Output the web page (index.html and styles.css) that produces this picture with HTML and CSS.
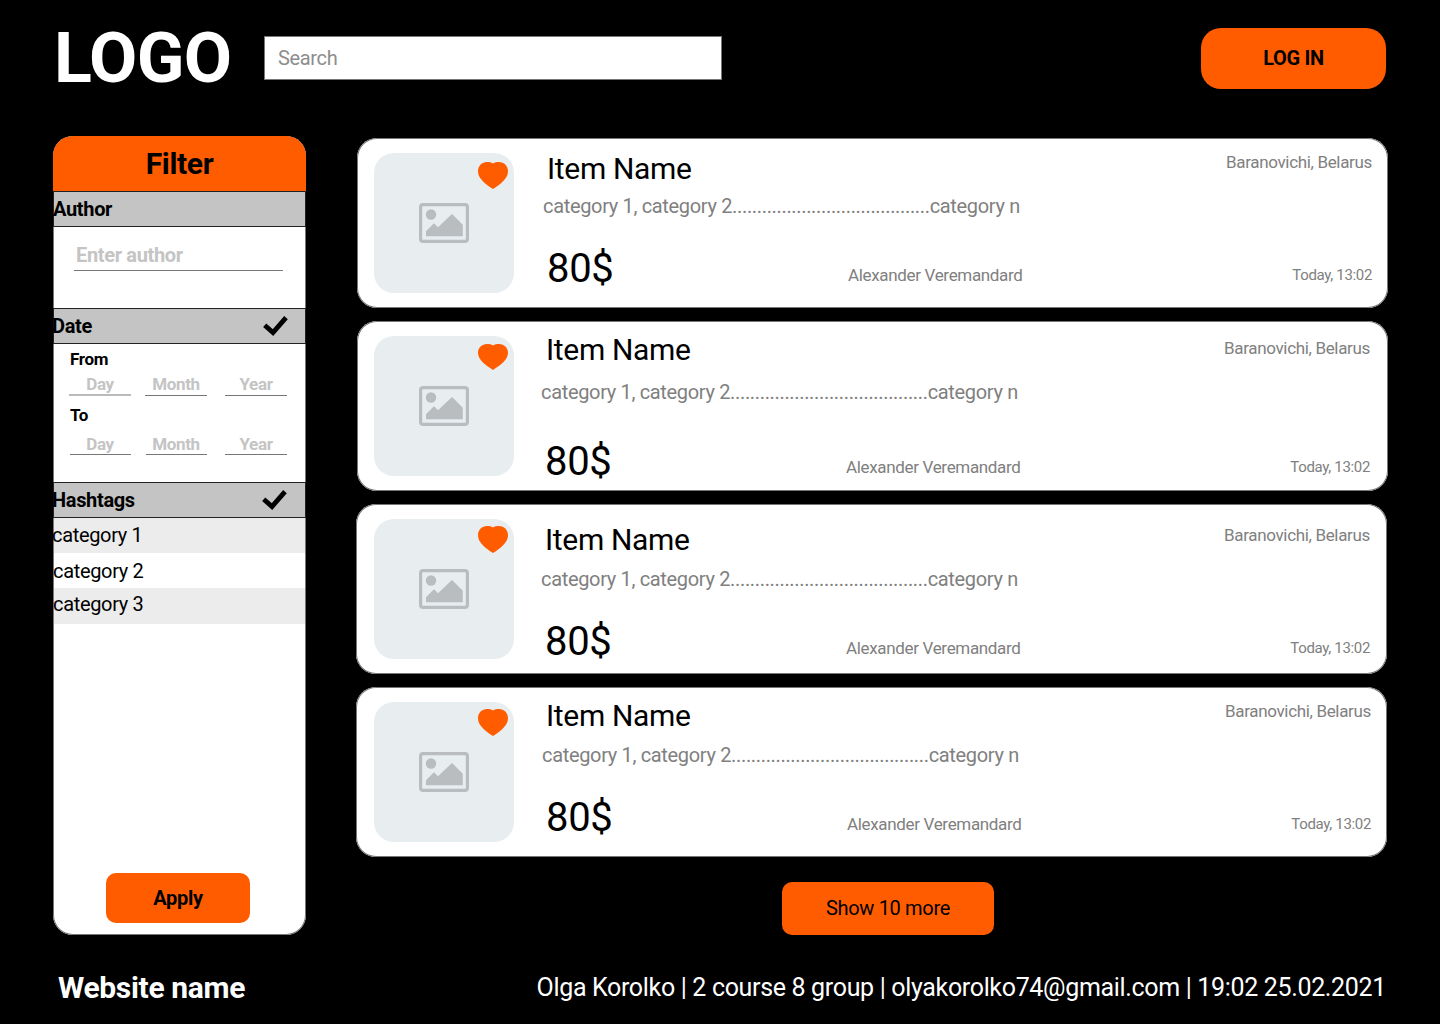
FILE: index.html
```html
<!DOCTYPE html>
<html lang="en">
<head>
<meta charset="utf-8">
<title>Website name</title>
<link rel="stylesheet" href="styles.css">
</head>
<body>
<svg class="sprite" aria-hidden="true">
  <symbol id="heart" viewBox="0 0 30 27" preserveAspectRatio="none"><path d="M15 1.500C13.500 .3 11 0 9 0 4 0 0 3.800 0 9.200 0 16.500 7.500 22 15 27 22.500 22 30 16.500 30 9.200 30 3.800 26 0 21 0 19 0 16.500 .3 15 1.500Z"/></symbol>
  <symbol id="picture" viewBox="0 0 50 40"><rect x="1.600" y="1.600" width="46.800" height="36.800" rx="2.500" fill="none" stroke="currentColor" stroke-width="3.200"/><circle cx="12" cy="11.500" r="5.200"/><path d="M7 33.200V28.300L15 20.300L19 24.300L33 11L43.800 21.800V33.200Z"/></symbol>
  <symbol id="check" viewBox="0 0 25 20"><path d="M1.700 9.300L10 16.600L23 1.700" fill="none" stroke="currentColor" stroke-width="4.800"/></symbol>
</svg>
<header class="header">
  <div class="logo">LOGO</div>
  <div class="search">Search</div>
  <button class="login">LOG IN</button>
</header>
<main class="main">
  <aside class="filter">
    <h2 class="filter-title">Filter</h2>
    <h3 class="section section-author">Author</h3>
    <div class="author-box"><div class="author-input">Enter author</div></div>
    <h3 class="section section-date">Date<svg class="check"><use href="#check"/></svg></h3>
    <div class="dates">
      <div class="date-label">From</div>
      <div class="date-row"><span class="field field-focus">Day</span><span class="field">Month</span><span class="field">Year</span></div>
      <div class="date-label date-label-to">To</div>
      <div class="date-row date-row-to"><span class="field">Day</span><span class="field">Month</span><span class="field">Year</span></div>
    </div>
    <h3 class="section section-tags">Hashtags<svg class="check"><use href="#check"/></svg></h3>
    <ul class="tags"><li>category 1</li><li>category 2</li><li>category 3</li></ul>
    <button class="apply">Apply</button>
  </aside>
  <section class="results">
    <article class="card card-first">
      <div class="thumb"><svg class="picture"><use href="#picture"/></svg><svg class="heart"><use href="#heart"/></svg></div>
      <div class="details"><h2 class="name">Item Name</h2><p class="categories">category 1, category 2........................................category n</p><p class="price">80$</p></div>
      <p class="seller">Alexander Veremandard</p>
      <div class="meta"><p class="place">Baranovichi, Belarus</p><p class="time">Today, 13:02</p></div>
    </article>
    <article class="card card-second">
      <div class="thumb"><svg class="picture"><use href="#picture"/></svg><svg class="heart"><use href="#heart"/></svg></div>
      <div class="details"><h2 class="name">Item Name</h2><p class="categories">category 1, category 2........................................category n</p><p class="price">80$</p></div>
      <p class="seller">Alexander Veremandard</p>
      <div class="meta"><p class="place">Baranovichi, Belarus</p><p class="time">Today, 13:02</p></div>
    </article>
    <article class="card card-third">
      <div class="thumb"><svg class="picture"><use href="#picture"/></svg><svg class="heart"><use href="#heart"/></svg></div>
      <div class="details"><h2 class="name">Item Name</h2><p class="categories">category 1, category 2........................................category n</p><p class="price">80$</p></div>
      <p class="seller">Alexander Veremandard</p>
      <div class="meta"><p class="place">Baranovichi, Belarus</p><p class="time">Today, 13:02</p></div>
    </article>
    <article class="card card-fourth">
      <div class="thumb"><svg class="picture"><use href="#picture"/></svg><svg class="heart"><use href="#heart"/></svg></div>
      <div class="details"><h2 class="name">Item Name</h2><p class="categories">category 1, category 2........................................category n</p><p class="price">80$</p></div>
      <p class="seller">Alexander Veremandard</p>
      <div class="meta"><p class="place">Baranovichi, Belarus</p><p class="time">Today, 13:02</p></div>
    </article>
    <button class="more">Show 10 more</button>
  </section>
</main>
<footer class="footer">
  <strong class="site">Website name</strong>
  <span class="credits">Olga Korolko | 2 course 8 group | olyakorolko74@gmail.com | 19:02 25.02.2021</span>
</footer>
</body>
</html>
```
FILE: styles.css
```css
* { box-sizing: border-box; margin: 0; padding: 0; }
body {
  width: 1440px;
  height: 1024px;
  overflow: hidden;
  background: #000;
  color: #000;
  font-family: Roboto, sans-serif;
  font-size: 20px;
  line-height: 24px;
  letter-spacing: -0.333px;
  white-space: nowrap;
}
button { border: 0; background: #ff5c00; color: #000; font: inherit; letter-spacing: inherit; }
svg { display: block; fill: currentColor; }
.sprite { display: none; }

.header { display: flex; height: 136px; padding: 28px 54px 0 54px; }
.logo { width: 210px; color: #fff; font-size: 70px; font-weight: 700; line-height: 60px; letter-spacing: -0.6px; }
.search { width: 458px; height: 44px; margin-top: 8px; padding: 9px 13px; border: 1px solid #777; background: #fff; color: #8d8d8d; }
.login { width: 185px; height: 61px; margin-left: auto; padding-bottom: 2px; border-radius: 20px; font-weight: 700; }

.main { display: flex; height: 824px; }
.filter {
  display: flex;
  flex-direction: column;
  width: 253px;
  height: 799px;
  margin-left: 53px;
  border-radius: 20px;
  background: #fff;
  box-shadow: inset 0 0 0 1px #777;
}
.filter-title { height: 55px; border-radius: 20px 20px 0 0; background: #ff5c00; font-size: 30px; line-height: 55px; text-align: center; }
.section { display: flex; justify-content: space-between; height: 36px; border: 1px solid #222; background: #c4c4c4; font-size: 20px; line-height: 35px; }
.section-author { text-indent: -1px; }
.section-date, .section-tags { padding-right: 17px; text-indent: -2px; }
.section-tags { padding-right: 18px; }
.check { width: 25px; height: 20px; margin-top: 7px; }
.author-box { height: 81px; padding: 15px 23px 0 21px; }
.author-input { height: 29px; padding-left: 2px; border-bottom: 1px solid #777; color: #c4c4c4; font-weight: 700; line-height: 27px; }
.dates { height: 138px; padding: 5px 19px 0 16px; font-size: 17px; font-weight: 700; line-height: 20px; }
.date-label { padding-left: 1px; }
.date-row { display: flex; margin-top: 5px; color: #c4c4c4; text-align: center; }
.field { width: 62px; height: 22px; border-bottom: 1px solid #777; }
.field:nth-child(2) { margin: 0 18px 0 14px; }
.field-focus { border-bottom: 2px solid #bbb; }
.date-label-to { margin-top: 9px; }
.date-row-to { margin-top: 9px; padding-left: 1px; }
.date-row-to .field { height: 21px; }
.date-row-to .field:nth-child(-n+2) { width: 61px; padding-right: 1px; }
.date-row-to .field:nth-child(2) { margin-left: 15px; }
.tags { list-style: none; height: 355px; padding: 0 1px; }
.tags li { height: 35px; line-height: 34px; text-indent: -1px; }
.tags li:first-child { text-indent: -2px; }
.tags li:nth-child(2) { line-height: 36px; }
.tags li:nth-child(3) { height: 36px; line-height: 33px; }
.tags li:nth-child(odd) { background: #ececec; }
.apply { width: 144px; height: 50px; margin-left: 53px; border-radius: 10px; font-weight: 700; }

.results { display: flex; flex-direction: column; gap: 13px; margin: 2px 0 0 51px; }
.card {
  display: flex;
  width: 1031px;
  height: 170px;
  padding: 0 16px 0 17px;
  border-radius: 20px;
  background: #fff;
  box-shadow: inset 0 0 0 1px #777;
  color: #808080;
}
.card-first { --name: 13px; --categories: 7px; --price: 27px; --seller: 127px; --place: 14px; --time: 93px; --heart: 9px; --shift: 0px; --name-left: 4px; }
.card-second { --name: 11px; --categories: 12px; --price: 34px; --seller: 136px; --place: 17px; --time: 99px; --heart: 8px; --shift: 2px; --name-left: 5px; }
.card-third { --name: 18px; --categories: 9px; --price: 27px; --seller: 134px; --place: 21px; --time: 93px; --heart: 7px; --shift: 2px; --name-left: 4px; }
.card-fourth { --name: 11px; --categories: 9px; --price: 27px; --seller: 127px; --place: 14px; --time: 93px; --heart: 7px; --shift: 1px; --name-left: 4px; }
.card-second { padding-right: 18px; }
.card-third, .card-fourth { margin-left: -1px; padding-left: 18px; }
.card-third { padding-right: 17px; }
.thumb { position: relative; width: 140px; height: 140px; margin-top: 15px; padding: 50px 45px; border-radius: 20px; background: #e8edf0; color: #b9bdbf; }
.picture { width: 50px; height: 40px; }
.heart { position: absolute; top: var(--heart); right: 6px; width: 30px; height: 27px; color: #ff5c00; }
.card-second .heart { height: 26px; }
.details { width: calc(305px - var(--shift)); padding-left: calc(29px - var(--shift)); }
.name { margin: var(--name) 0 0 var(--name-left); color: #000; font-size: 30px; font-weight: 400; line-height: 36px; }
.categories { margin-top: var(--categories); }
.price { margin: var(--price) 0 0 4px; color: #000; font-size: 40px; line-height: 48px; }
.seller { margin: var(--seller) 0 0 29px; font-size: 17px; line-height: 20px; }
.meta { margin-left: auto; text-align: right; font-size: 17px; line-height: 20px; }
.place { margin-top: var(--place); }
.time { margin-top: var(--time); font-size: 15px; }
.more { width: 212px; height: 53px; margin: 12px 0 0 425px; padding: 0 0 1px; border-radius: 10px; }

.footer { display: flex; justify-content: space-between; padding: 10px 54px 0 58px; color: #fff; font-size: 25px; line-height: 36px; }
.site { font-size: 30px; }
```
